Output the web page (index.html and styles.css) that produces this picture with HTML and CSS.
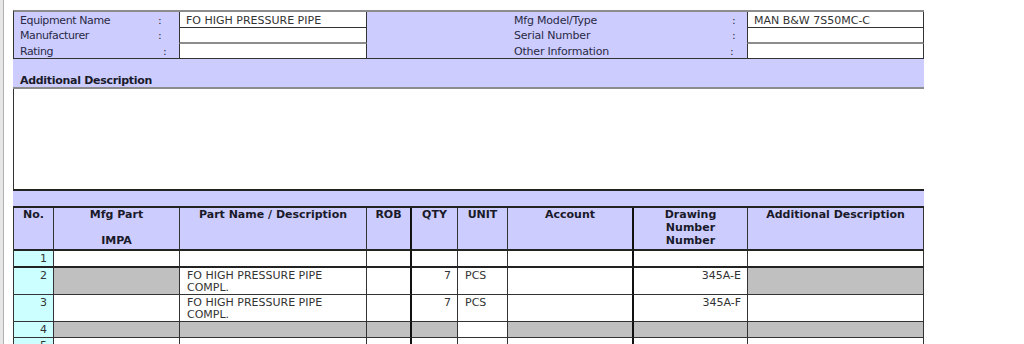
FILE: index.html
```html
<!DOCTYPE html>
<html>
<head>
<meta charset="utf-8">
<link rel="stylesheet" href="styles.css">
</head>
<body>
<div class="page">
  <div class="inner">
    <div class="hdr">
      <div class="lab r1"><span class="k">Equipment Name</span>:</div>
      <div class="val r1 b1">FO HIGH PRESSURE PIPE</div>
      <div class="lab2 r1"><span class="k2">Mfg Model/Type</span>:</div>
      <div class="val last r1 b1">MAN B&amp;W 7S50MC-C</div>

      <div class="lab"><span class="k">Manufacturer</span>:</div>
      <div class="val b2"></div>
      <div class="lab2"><span class="k2">Serial Number</span>:</div>
      <div class="val last b2"></div>

      <div class="lab"><span class="k kr">Rating</span>:</div>
      <div class="val"></div>
      <div class="lab2"><span class="k2 k2r">Other Information</span>:</div>
      <div class="val last"></div>
    </div>

    <div class="band addl">Additional Description</div>
    <div class="desc-box"></div>
    <div class="band thin"></div>

    <div class="items">
      <div class="th">No.</div>
      <div class="th">Mfg Part<br><br>IMPA</div>
      <div class="th">Part Name / Description</div>
      <div class="th thick">ROB</div>
      <div class="th">QTY</div>
      <div class="th">UNIT</div>
      <div class="th thick">Account</div>
      <div class="th">Drawing<br>Number<br>Number</div>
      <div class="th">Additional Description</div>

      <div class="td no first">1</div>
      <div class="td first"></div>
      <div class="td first"></div>
      <div class="td first thick"></div>
      <div class="td first"></div>
      <div class="td first"></div>
      <div class="td first thick"></div>
      <div class="td first"></div>
      <div class="td first"></div>

      <div class="td no dbl">2</div>
      <div class="td dbl grey"></div>
      <div class="td dbl">FO HIGH PRESSURE PIPE<br>COMPL.</div>
      <div class="td dbl thick"></div>
      <div class="td dbl num">7</div>
      <div class="td dbl">PCS</div>
      <div class="td dbl thick"></div>
      <div class="td dbl num">345A-E</div>
      <div class="td dbl grey"></div>

      <div class="td no dbl">3</div>
      <div class="td dbl"></div>
      <div class="td dbl">FO HIGH PRESSURE PIPE<br>COMPL.</div>
      <div class="td dbl thick"></div>
      <div class="td dbl num">7</div>
      <div class="td dbl">PCS</div>
      <div class="td dbl thick"></div>
      <div class="td dbl num">345A-F</div>
      <div class="td dbl"></div>

      <div class="td no">4</div>
      <div class="td grey"></div>
      <div class="td grey"></div>
      <div class="td grey thick"></div>
      <div class="td grey"></div>
      <div class="td"></div>
      <div class="td grey thick"></div>
      <div class="td grey"></div>
      <div class="td grey"></div>

      <div class="td no">5</div>
      <div class="td"></div>
      <div class="td"></div>
      <div class="td thick"></div>
      <div class="td"></div>
      <div class="td"></div>
      <div class="td thick"></div>
      <div class="td"></div>
      <div class="td"></div>
    </div>
  </div>
</div>
</body>
</html>
```

FILE: styles.css
```css
html, body {
  margin: 0;
  padding: 0;
  background: #ffffff;
  overflow: hidden;
}

body {
  font-family: "DejaVu Sans", "Liberation Sans", sans-serif;
  font-size: 11px;
  color: #2a2a2a;
}

.page {
  height: 344px;
  border-left: 3px solid #e6e6e6;
}

.inner {
  height: 344px;
  border-left: 1px solid #b0b0b0;
  padding: 10px 0 0 9px;
  box-sizing: border-box;
}

/* ---------- header block ---------- */
.hdr {
  width: 911px;
  box-sizing: border-box;
  display: grid;
  grid-template-columns: 165px 188px 380px 177px;
  border-top: 2px solid #8c8c8c;
  border-left: 1px solid #333;
  border-bottom: 1px solid #333;
  background: #ccccff;
}

.hdr > div {
  box-sizing: border-box;
  line-height: 12px;
  padding-top: 2px;
  height: 14px;
  white-space: nowrap;
}

.hdr > div.r1 {
  padding-top: 3px;
  height: 15px;
}

.hdr > div.b1 { height: 16px; }
.hdr > div.b2 { height: 16px; }

.lab {
  padding-left: 6px;
  color: #2a2a44;
  letter-spacing: -0.4px;
}

.lab2 {
  padding-left: 147px;
  color: #2a2a44;
  letter-spacing: -0.2px;
}

.k {
  display: inline-block;
  width: 138px;
}

.k.kr { width: 143px; }

.k2 {
  display: inline-block;
  width: 218px;
}

.k2.k2r { width: 216px; }

.val {
  background: #ffffff;
  border-left: 1px solid #333;
  border-right: 1px solid #333;
  padding-left: 6px;
  color: #333;
}

.val.b1 { border-bottom: 1px solid #333; }
.val.b2 { border-bottom: 2px solid #8c8c8c; }

/* ---------- bands ---------- */
.band {
  width: 911px;
  box-sizing: border-box;
  background: #ccccff;
}

.addl {
  height: 30px;
  padding: 16px 0 0 7px;
  line-height: 12px;
  font-weight: bold;
  color: #1a1a2a;
  letter-spacing: -0.3px;
  border-bottom: 2px solid #8c8c8c;
}

.desc-box {
  width: 911px;
  box-sizing: border-box;
  height: 102px;
  border-left: 1px solid #333;
  border-bottom: 2px solid #222;
  background: #ffffff;
}

.thin {
  height: 16px;
  border-bottom: 1px solid #222;
}

/* ---------- items table ---------- */
.items {
  width: 911px;
  box-sizing: border-box;
  display: grid;
  grid-template-columns: 40px 126px 187px 45px 46px 50px 126px 114px 176px;
  border-left: 1px solid #333;
  border-top: 1px solid #222;
}

.th, .td {
  box-sizing: border-box;
  border-right: 1px solid #333;
}

.th.thick, .td.thick { border-right: 2px solid #111; }

.th {
  background: #ccccff;
  font-weight: bold;
  text-align: center;
  line-height: 13px;
  padding: 0 2px 2px;
  color: #1a1a2a;
  border-bottom: 2px solid #222;
}

.td {
  background: #ffffff;
  line-height: 12px;
  padding: 2px 6px 1px 7px;
  border-bottom: 1px solid #333;
  color: #333;
  white-space: nowrap;
}

.td.first { border-bottom: 2px solid #222; }

.td.dbl { padding-bottom: 0; }

.td.no {
  background: #ccffff;
  text-align: right;
  padding-right: 6px;
}

.td.num {
  text-align: right;
  padding-right: 6px;
}

.td.grey { background: #c0c0c0; }
```
